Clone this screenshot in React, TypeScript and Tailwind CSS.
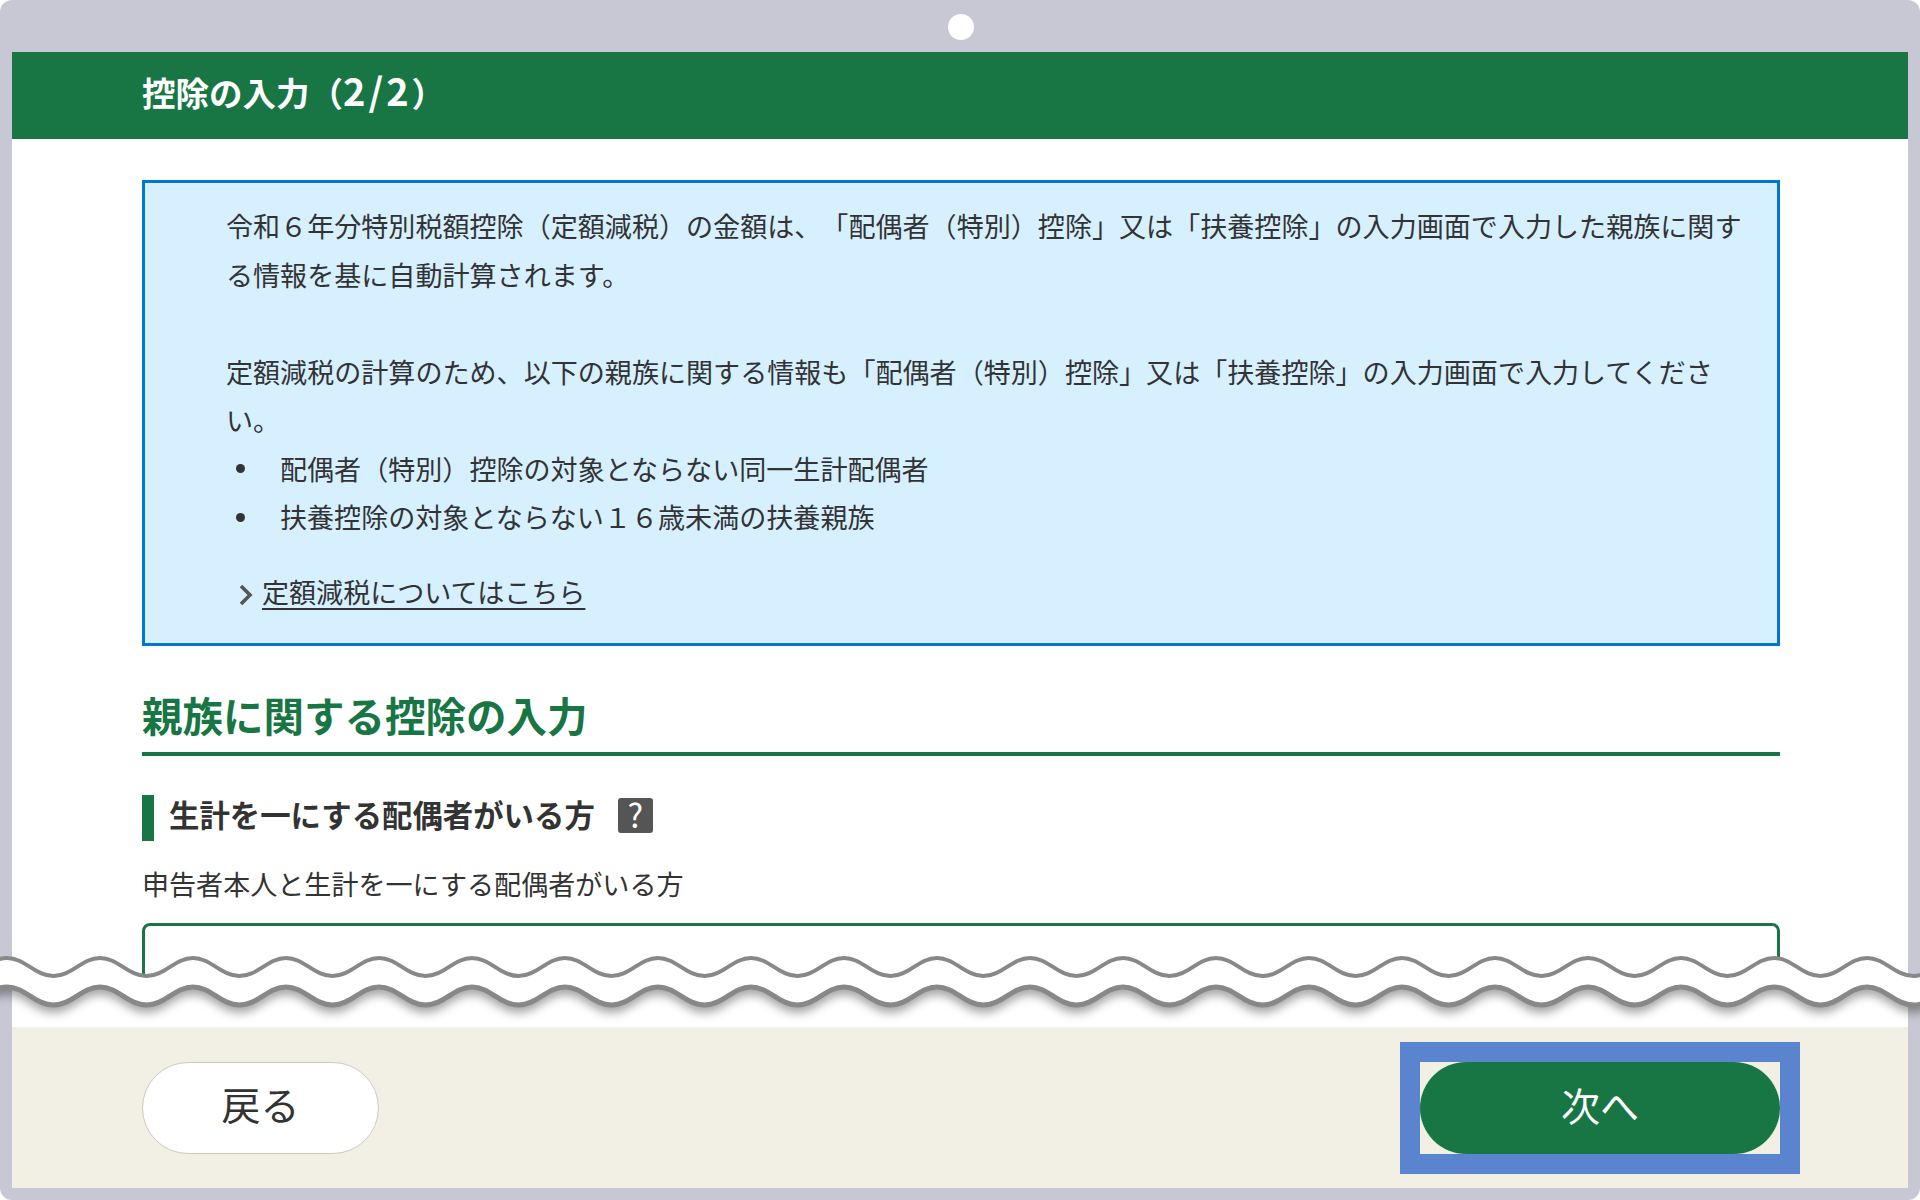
const PERIOD = 93;
const START = -86;
const END = START + PERIOD * 23;

// wave through crests at x = 7 + 93k
function wave(y: number, amp: number) {
  let d = `M${START},${y}`;
  for (let x = START; x < END; x += PERIOD) {
    d += ` C${x + 18},${y} ${x + 28},${y + amp} ${x + 46.5},${y + amp}`;
    d += ` C${x + 65},${y + amp} ${x + 75},${y} ${x + PERIOD},${y}`;
  }
  return d;
}

// same wave, walked right to left, to close the band between the two lines
function waveBack(y: number, amp: number) {
  let d = ` L${END},${y}`;
  for (let x = END; x > START; x -= PERIOD) {
    d += ` C${x - 18},${y} ${x - 28},${y + amp} ${x - 46.5},${y + amp}`;
    d += ` C${x - 65},${y + amp} ${x - 75},${y} ${x - PERIOD},${y}`;
  }
  return d;
}

function Waves() {
  return (
    <svg
      className="absolute left-0 top-[900px] w-[1920px] h-[160px] pointer-events-none"
      viewBox="0 900 1920 160"
      fill="none"
    >
      <path
        d={`${wave(987, 18)}${waveBack(958, 18)} Z`}
        fill="#ffffff"
        className="drop-shadow-[0_8px_5px_rgba(0,0,0,0.35)]"
      />
      <path d={wave(987, 18)} stroke="#888888" strokeWidth={5} />
      <path d={wave(958, 18)} stroke="#888888" strokeWidth={4} />
    </svg>
  );
}

function Bullet({ children }: { children: React.ReactNode }) {
  return (
    <li className="flex items-center">
      <span className="w-[9px] h-[9px] rounded-full bg-[#333] ml-[10px] mr-[35px]" />
      {children}
    </li>
  );
}

export default function App() {
  return (
    <div className="relative w-[1920px] h-[1200px] bg-white overflow-hidden [font-family:'Noto_Sans_CJK_JP','Liberation_Sans',sans-serif] [text-spacing-trim:space-all] text-[#333]">
      <div className="w-full h-full bg-[#c8c8d4] rounded-[12px] pt-[52px] px-[12px] pb-[12px]">
        <main className="h-full bg-white flex flex-col">
          <header className="h-[87px] shrink-0 bg-[#177644] text-white pl-[130px] pb-[13px] flex items-center">
            <h1 className="text-[33.5px] font-bold">
              控除の入力（<span className="text-[38px] tracking-[3px]">2/2</span>）
            </h1>
          </header>

          <section className="h-[836px] shrink-0 overflow-hidden pl-[130px] pr-[128px] pt-[41px]">
            <div className="h-[466px] border-[3px] border-[#0078d2] bg-[#d6f0ff] pt-[19px] pl-[81px] pr-[25px] text-[27.07px] leading-[48.5px]">
              <p>
                令和６年分特別税額控除（定額減税）の金額は、「配偶者（特別）控除」又は「扶養控除」の入力画面で入力した親族に関する情報を基に自動計算されます。
              </p>
              <p className="mt-[48.5px]">
                定額減税の計算のため、以下の親族に関する情報も「配偶者（特別）控除」又は「扶養控除」の入力画面で入力してください。
              </p>
              <ul>
                <Bullet>配偶者（特別）控除の対象とならない同一生計配偶者</Bullet>
                <Bullet>扶養控除の対象とならない１６歳未満の扶養親族</Bullet>
              </ul>
              <a href="#" className="mt-[26px] flex items-center">
                <svg width="16" height="22" viewBox="0 0 16 22" fill="none" className="ml-[12px] mr-[8px] mt-[6px]">
                  <path d="M3 2 L12 11 L3 20" stroke="#555" strokeWidth="3.6" />
                </svg>
                <span className="underline underline-offset-[5px] decoration-[2px]">定額減税についてはこちら</span>
              </a>
            </div>

            <h2 className="mt-[44px] pb-[12px] border-b-[4px] border-[#177644] text-[40.5px] leading-[50px] font-bold text-[#177644]">
              親族に関する控除の入力
            </h2>

            <div className="mt-[39px] flex items-center h-[46px] border-l-[12px] border-[#177644] pl-[15px]">
              <h3 className="text-[30.4px] font-bold relative -top-[3px]">生計を一にする配偶者がいる方</h3>
              <span className="ml-[23px] w-[35px] h-[35px] relative -top-[3px] rounded-[3px] bg-[#555] text-white text-[33px] leading-[33px] text-center">
                ?
              </span>
            </div>

            <p className="mt-[19px] text-[27.07px] leading-[48px]">申告者本人と生計を一にする配偶者がいる方</p>

            <div className="mt-[15px] h-[100px] rounded-[8px] border-[3px] border-[#177644]" />
          </section>

          <div className="flex-1 bg-white" />

          <footer className="h-[161px] shrink-0 bg-[#f2f0e5] pl-[130px] pr-[128px] pt-[35px] flex items-start justify-between">
            <button className="w-[237px] h-[92px] pb-[9px] rounded-full bg-white border border-[#cfc8bc] text-[39px]">
              戻る
            </button>
            <div className="outline-[20px] outline-[#5b84cf]">
              <button className="block w-[360px] h-[92px] pb-[7px] rounded-full bg-[#177644] text-white text-[39px]">
                次へ
              </button>
            </div>
          </footer>
        </main>
      </div>

      <Waves />
      <div className="absolute left-[948px] top-[14px] w-[26px] h-[26px] rounded-full bg-white" />
    </div>
  );
}
